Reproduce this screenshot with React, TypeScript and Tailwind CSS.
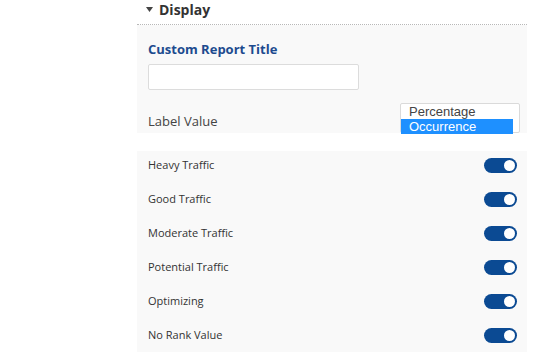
import { useState } from 'react';

const layers = [
  'Heavy Traffic',
  'Good Traffic',
  'Moderate Traffic',
  'Potential Traffic',
  'Optimizing',
  'No Rank Value',
];

function Toggle({ on }: { on: boolean }) {
  return (
    <div
      className={`flex h-[15px] w-[33px] items-center rounded-full px-[2px] ${
        on ? 'justify-end bg-[#0b4a93]' : 'justify-start bg-[#c8c8c8]'
      }`}
    >
      <div className="h-[11px] w-[11px] rounded-full bg-white" />
    </div>
  );
}

export default function App() {
  const [value] = useState('Occurrence');

  return (
    <div className="h-[352px] w-[542px] overflow-hidden bg-white font-['Open_Sans',sans-serif]">
      <div className="ml-[137px] w-[390px]">
        {/* Section header */}
        <div className="flex h-[25px] items-center gap-[6px] border-b border-dotted border-[#b8b8b8] pl-[9px] pb-[5px]">
          <svg width="7" height="5" viewBox="0 0 7 5">
            <path d="M0 0 L7 0 L3.5 5 Z" fill="#444" />
          </svg>
          <span className="text-[14px] font-bold text-[#333]">Display</span>
        </div>

        {/* Title + label value */}
        <div className="h-[108px] bg-[#f9f9f9] px-[11px] pt-[15px]">
          <div className="text-[13px] font-bold leading-[18px] text-[#1d4b8f]">
            Custom Report Title
          </div>
          <input
            type="text"
            className="mt-[6px] block h-[26px] w-[211px] rounded-[2px] border border-[#dcdcdc] bg-white outline-none"
          />
          <div className="mt-[13px] flex items-start justify-between">
            <span className="mt-[9px] text-[13px] leading-[18px] text-[#444]">Label Value</span>
            <div className="mr-[-4px] h-[30px] w-[120px] rounded-[2px] border border-[#dadada] bg-white pr-[6px] font-['Liberation_Sans',sans-serif] text-[13px] leading-[15px] text-[#444]">
              {['Percentage', 'Occurrence'].map((opt) => (
                <div
                  key={opt}
                  className={`pl-[8px] ${opt === value ? 'bg-[#1e90ff] text-white' : ''}`}
                >
                  {opt}
                </div>
              ))}
            </div>
          </div>
        </div>

        {/* Layer toggles */}
        <div className="mt-[18px] flex flex-col gap-[14px] bg-[#f9f9f9] pt-[4px] pb-[10px] pl-[11px] pr-[10px]">
          {layers.map((name) => (
            <div key={name} className="flex h-[20px] items-center justify-between">
              <span className="text-[11px] text-[#333]">{name}</span>
              <Toggle on />
            </div>
          ))}
        </div>
      </div>
    </div>
  );
}
